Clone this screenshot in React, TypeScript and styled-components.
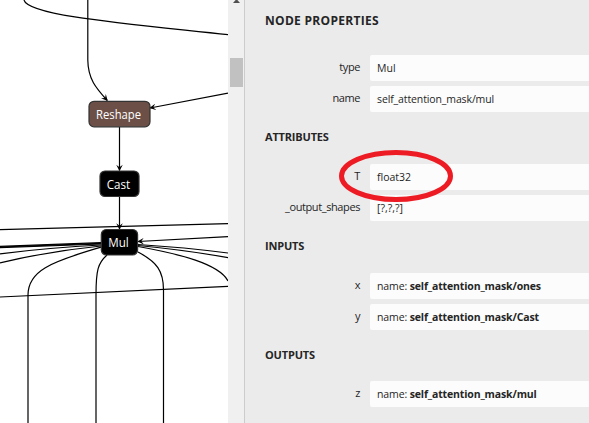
import React from "react";
import styled, { createGlobalStyle } from "styled-components";

const GlobalStyle = createGlobalStyle`
  body { margin: 0; overflow: hidden; background: #fff; }
  * { box-sizing: border-box; }
`;

const Viewer = styled.div`
  position: relative;
  display: flex;
  width: 589px;
  height: 423px;
  overflow: hidden;
  font-family: "Open Sans", "Noto Sans", sans-serif;
`;

const Graph = styled.svg`
  display: block;
  flex: 0 0 228px;
  height: 423px;
  background: #fff;
`;

const Edge = styled.path`
  fill: none;
  stroke: #000;
  stroke-width: 1.2px;
`;

const NodeBox = styled.rect<{ $fill: string }>`
  fill: ${(p) => p.$fill};
  stroke: #333;
  stroke-width: 1.2px;
`;

const NodeLabel = styled.text`
  fill: #fff;
  font-size: 12px;
`;

const ScrollTrack = styled.div`
  display: flex;
  flex-direction: column;
  align-items: center;
  flex: 0 0 16px;
  background: #f0f0f0;
`;

const ScrollArrow = styled.svg`
  display: block;
  width: 16px;
  height: 58px;
`;

const ScrollThumb = styled.div`
  width: 13px;
  height: 29px;
  margin-left: 1px;
  background: #c1c1c1;
`;

const Sidebar = styled.aside`
  flex: 1;
  padding-left: 20px;
  border-left: 1px solid #ccc;
  background: #ebebeb;
  color: #252525;
`;

const Title = styled.h1`
  height: 55px;
  margin: 0;
  padding-top: 11px;
  font-size: 12px;
  font-weight: 700;
  line-height: 20px;
  letter-spacing: 0.3px;
`;

const Heading = styled.h2<{ $height: number }>`
  height: ${(p) => p.$height}px;
  margin: 0;
  padding-top: 16px;
  font-size: 11px;
  font-weight: 700;
  line-height: 20px;
  letter-spacing: -0.18px;
`;

const Rows = styled.div`
  display: grid;
  gap: 6px;
`;

const Row = styled.div`
  display: grid;
  grid-template-columns: 95px 1fr;
  column-gap: 10px;
  height: 25px;
`;

const Name = styled.div`
  font-size: 11px;
  line-height: 24px;
  text-align: right;
  white-space: nowrap;
  letter-spacing: -0.4px;
`;

const Value = styled.div<{ $spacing: number }>`
  padding-left: 7px;
  border-radius: 2px 0 0 2px;
  background: #fcfcfc;
  font-size: 10.5px;
  line-height: 26px;
  white-space: nowrap;
  letter-spacing: ${(p) => p.$spacing}px;

  b {
    font-weight: 700;
    letter-spacing: -0.14px;
  }
`;

const Annotation = styled.svg`
  position: absolute;
  left: 336px;
  top: 147px;
  width: 120px;
  height: 58px;
`;

type Property = { name: string; value: string; bold?: string; spacing?: number };

function PropertyRows({ items }: { items: Property[] }) {
  return (
    <Rows>
      {items.map((p) => (
        <Row key={p.name}>
          <Name>{p.name}</Name>
          <Value $spacing={p.spacing ?? 0}>
            {p.value}
            {p.bold && <b>{p.bold}</b>}
          </Value>
        </Row>
      ))}
    </Rows>
  );
}

const edges = [
  "M24 0 C28 16 130 24 228 34.7",
  "M0 229.6 L228 223.6",
  "M101 242.6 L0 246.4",
  "M101 243.3 L0 247",
  "M101 244 L0 247.6",
  "M101 245 Q50 247.5 0 253.8",
  "M101 246 Q50 251 0 262.8",
  "M101 247.2 C50 262 28 271 28 295 V423",
  "M107 255 C98 263 96 270 96 295 V423",
  "M138 252 C157 262 163.5 271 163.5 290 V423",
  "M138 244.5 Q185 247.5 228 253",
  "M138 245.5 Q185 250 228 257.6",
  "M138 246.5 C180 254 219 264 228 281",
  "M0 297 L228 286.3",
];

const arrows = [
  "M87.8 0 V60 C88 79 96 88 107.3 100.5",
  "M228 93.2 L150 108",
  "M119.5 127 V170.5",
  "M119.5 197 V229",
  "M228 236.6 L138 241.5",
];

const nodes = [
  { label: "Reshape", x: 89, y: 101.3, w: 61, h: 25.5, fill: "#6c4f47", tx: 96, tw: 45 },
  { label: "Cast", x: 100, y: 171, w: 39, h: 25.5, fill: "#000", tx: 106.7, tw: 23.5 },
  { label: "Mul", x: 101.3, y: 229.5, w: 36.3, h: 25.5, fill: "#000", tx: 108.3, tw: 20.5 },
];

export default function App() {
  return (
    <>
      <GlobalStyle />
      <Viewer>
        <Graph viewBox="0 0 228 423">
          <defs>
            <marker id="vee" viewBox="0 0 10 10" refX="9" refY="5" markerWidth="7" markerHeight="6.5" markerUnits="userSpaceOnUse" orient="auto">
              <path d="M0 0 L10 5 L0 10 L4 5 Z" />
            </marker>
          </defs>
          {edges.map((d) => <Edge key={d} d={d} />)}
          {arrows.map((d) => <Edge key={d} d={d} markerEnd="url(#vee)" />)}
          {nodes.map((n) => (
            <g key={n.label}>
              <NodeBox x={n.x} y={n.y} width={n.w} height={n.h} rx={5} $fill={n.fill} />
              <NodeLabel x={n.tx} y={n.y + 17.7} textLength={n.tw} lengthAdjust="spacingAndGlyphs">
                {n.label}
              </NodeLabel>
            </g>
          ))}
        </Graph>
        <ScrollTrack>
          <ScrollArrow viewBox="0 0 16 58">
            <path d="M8.5 -1 L12 3 H5 Z" fill="#505050" />
          </ScrollArrow>
          <ScrollThumb />
        </ScrollTrack>
        <Sidebar>
          <Title>NODE PROPERTIES</Title>
          <PropertyRows
            items={[
              { name: "type", value: "Mul" },
              { name: "name", value: "self_attention_mask/mul", spacing: -0.12 },
            ]}
          />
          <Heading $height={53}>ATTRIBUTES</Heading>
          <PropertyRows
            items={[
              { name: "T", value: "float32" },
              { name: "_output_shapes", value: "[?,?,?]" },
            ]}
          />
          <Heading $height={53}>INPUTS</Heading>
          <PropertyRows
            items={[
              { name: "x", value: "name: ", bold: "self_attention_mask/ones", spacing: -0.12 },
              { name: "y", value: "name: ", bold: "self_attention_mask/Cast", spacing: -0.12 },
            ]}
          />
          <Heading $height={52}>OUTPUTS</Heading>
          <PropertyRows items={[{ name: "z", value: "name: ", bold: "self_attention_mask/mul", spacing: -0.12 }]} />
        </Sidebar>
        <Annotation viewBox="0 0 120 58">
          <ellipse cx="60" cy="29" rx="54.5" ry="23.5" fill="none" stroke="#ed1c24" strokeWidth="5" />
        </Annotation>
      </Viewer>
    </>
  );
}
